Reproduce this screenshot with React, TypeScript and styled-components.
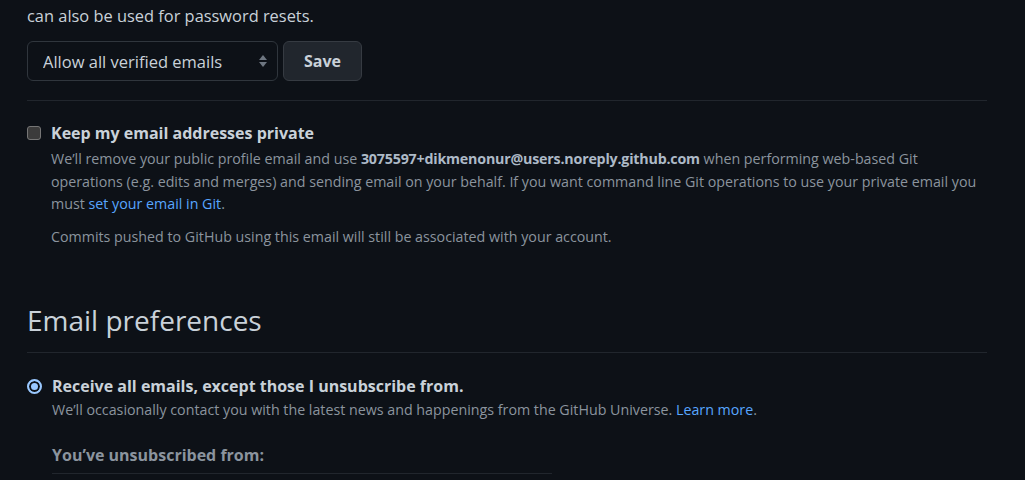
import React from 'react'
import styled, { createGlobalStyle } from 'styled-components'

const GlobalStyle = createGlobalStyle`
	body {
		margin: 0;
		background: #0d1117;
		color: #c9d1d9;
		font-family: 'Open Sans', 'Noto Sans', sans-serif;
	}
`

const Page = styled.div`
	width: 960px;
	padding: 4px 0 0 27px;
	font-size: 16px;
	line-height: 24px;
`

const Intro = styled.p`
	margin: 0;
	font-size: 16.4px;
`

const FormRow = styled.div`
	display: flex;
	gap: 5px;
	margin-top: 13px;
`

const SelectWrap = styled.div`
	position: relative;
	width: 251px;
	height: 40px;

	svg {
		position: absolute;
		right: 11px;
		top: 14px;
		pointer-events: none;
	}
`

const Select = styled.select`
	appearance: none;
	width: 100%;
	height: 100%;
	box-sizing: border-box;
	padding: 1px 30px 0 15px;
	background: #0d1117;
	color: #c9d1d9;
	border: 1px solid #30363d;
	border-radius: 6px;
	font: inherit;
	font-size: 16.5px;
`

const Button = styled.button`
	width: 79px;
	height: 40px;
	padding-top: 1px;
	background: #21262d;
	color: #c9d1d9;
	border: 1px solid #363b42;
	border-radius: 6px;
	font: inherit;
	font-size: 16px;
	font-weight: 700;
	cursor: pointer;
`

const Divider = styled.hr<{ $top: number }>`
	border: none;
	border-top: 1px solid #21262d;
	margin: ${p => p.$top}px 0 0;
`

const Option = styled.div<{ $top: number }>`
	display: flex;
	align-items: flex-start;
	gap: 10px;
	margin-top: ${p => p.$top}px;
`

const Checkbox = styled.input.attrs({ type: 'checkbox' })`
	appearance: none;
	flex: none;
	width: 14px;
	height: 14px;
	margin: 5px 0 0;
	background: #3b3b3b;
	border: 1px solid #767676;
	border-radius: 3px;
	box-sizing: border-box;
`

const Radio = styled.input.attrs({ type: 'radio' })`
	appearance: none;
	flex: none;
	width: 15px;
	height: 15px;
	margin: 5px 0 0;
	border: 2px solid #99c8ff;
	border-radius: 50%;
	background: #99c8ff;
	box-shadow: inset 0 0 0 2px #0d1117;
	box-sizing: border-box;
`

const OptionBody = styled.div`
	flex: 1;
`

const Label = styled.label`
	display: block;
	font-weight: 700;
	color: #c9d1d9;
`

const Note = styled.p<{ $gap?: number }>`
	margin: ${p => p.$gap ?? 0}px 0 0;
	font-size: 14.25px;
	line-height: 22.5px;
	color: #8b949e;

	strong {
		color: #adbac7;
		letter-spacing: -0.2px;
	}

	a {
		color: #58a6ff;
		text-decoration: none;
	}
`

const Subhead = styled.h2`
	margin: 51px 0 0;
	padding-bottom: 11px;
	border-bottom: 1px solid #21262d;
	font-size: 28px;
	font-weight: 400;
	line-height: 42px;
	color: #c9d1d9;
`

const Unsubscribed = styled.h4`
	width: 500px;
	margin: 21px 0 0;
	padding-bottom: 6px;
	border-bottom: 1px solid #21262d;
	font-size: 16px;
	font-weight: 700;
	line-height: 24px;
	color: #8b949e;
`

const SortIcon = () => (
	<svg width="8" height="12" viewBox="0 0 8 12">
		<path d="M4 0 L8 5 L0 5 Z" fill="#6e7681" />
		<path d="M0 7 L8 7 L4 12 Z" fill="#6e7681" />
	</svg>
)

export default function App() {
	return (
		<Page>
			<GlobalStyle />
			<Intro>can also be used for password resets.</Intro>
			<FormRow>
				<SelectWrap>
					<Select defaultValue='all'>
						<option value='all'>Allow all verified emails</option>
					</Select>
					<SortIcon />
				</SelectWrap>
				<Button>Save</Button>
			</FormRow>
			<Divider $top={19} />

			<Option $top={20}>
				<Checkbox id='private' />
				<OptionBody>
					<Label htmlFor='private'>Keep my email addresses private</Label>
					<Note $gap={3}>
						We’ll remove your public profile email and use <strong>3075597+dikmenonur@users.noreply.github.com</strong> when performing web-based Git operations (e.g. edits and merges) and sending email on your behalf. If you want command line Git operations to use your private email you must <a href='#'>set your email in Git</a>.
					</Note>
					<Note $gap={10}>Commits pushed to GitHub using this email will still be associated with your account.</Note>
				</OptionBody>
			</Option>

			<Subhead>Email preferences</Subhead>

			<Option $top={21}>
				<Radio id='all-emails' name='pref' defaultChecked />
				<OptionBody>
					<Label htmlFor='all-emails'>Receive all emails, except those I unsubscribe from.</Label>
					<Note $gap={1}>
						We’ll occasionally contact you with the latest news and happenings from the GitHub Universe. <a href='#'>Learn more</a>.
					</Note>
					<Unsubscribed>You’ve unsubscribed from:</Unsubscribed>
				</OptionBody>
			</Option>
		</Page>
	)
}
